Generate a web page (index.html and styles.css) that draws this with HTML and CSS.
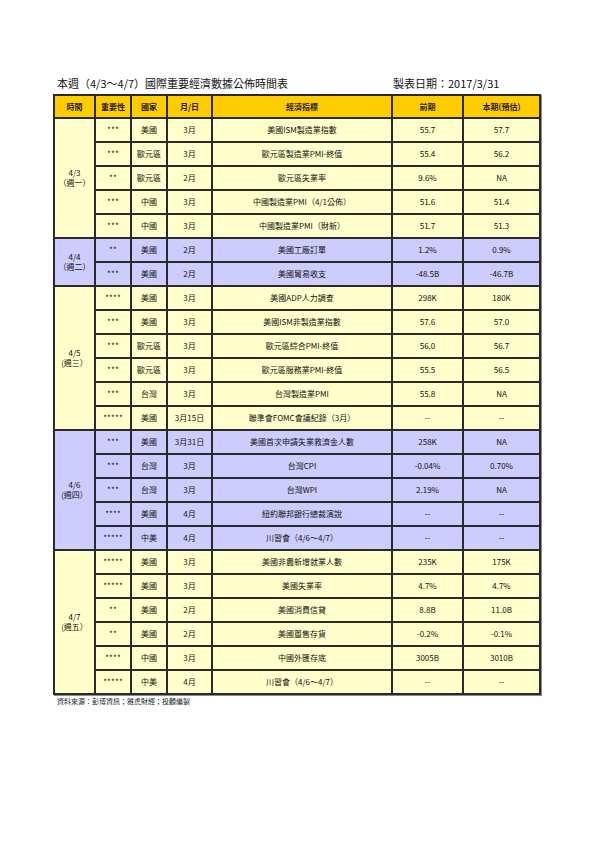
FILE: index.html
```html
<!DOCTYPE html>
<html lang="zh-Hant">
<head>
<meta charset="utf-8">
<link rel="stylesheet" href="styles.css">
</head>
<body>
<div class="page">
  <div class="title-row">
    <div class="title">本週（4/3～4/7）國際重要經濟數據公佈時間表</div>
    <div class="date">製表日期：2017/3/31</div>
  </div>
  <table class="sched">
    <colgroup>
      <col class="c-time"><col class="c-imp"><col class="c-country"><col class="c-month"><col class="c-ind"><col class="c-prev"><col class="c-cur">
    </colgroup>
    <thead>
      <tr class="head"><th>時間</th><th>重要性</th><th>國家</th><th>月/日</th><th>經濟指標</th><th>前期</th><th>本期(預估)</th></tr>
    </thead>
    <tbody class="yellow">
      <tr><td class="day" rowspan="5">4/3<br>（週一）</td><td class="star">***</td><td>美國</td><td>3月</td><td>美國ISM製造業指數</td><td>55.7</td><td>57.7</td></tr>
      <tr><td class="star">***</td><td>歐元區</td><td>3月</td><td>歐元區製造業PMI-終值</td><td>55.4</td><td>56.2</td></tr>
      <tr><td class="star">**</td><td>歐元區</td><td>2月</td><td>歐元區失業率</td><td>9.6%</td><td>NA</td></tr>
      <tr><td class="star">***</td><td>中國</td><td>3月</td><td>中國製造業PMI（4/1公佈）</td><td>51.6</td><td>51.4</td></tr>
      <tr><td class="star">***</td><td>中國</td><td>3月</td><td>中國製造業PMI（財新）</td><td>51.7</td><td>51.3</td></tr>
    </tbody>
    <tbody class="blue">
      <tr><td class="day" rowspan="2">4/4<br>（週二）</td><td class="star">**</td><td>美國</td><td>2月</td><td>美國工廠訂單</td><td>1.2%</td><td>0.9%</td></tr>
      <tr><td class="star">***</td><td>美國</td><td>2月</td><td>美國貿易收支</td><td>-48.5B</td><td>-46.7B</td></tr>
    </tbody>
    <tbody class="yellow">
      <tr><td class="day" rowspan="6">4/5<br>(週三）</td><td class="star">****</td><td>美國</td><td>3月</td><td>美國ADP人力調查</td><td>298K</td><td>180K</td></tr>
      <tr><td class="star">***</td><td>美國</td><td>3月</td><td>美國ISM非製造業指數</td><td>57.6</td><td>57.0</td></tr>
      <tr><td class="star">***</td><td>歐元區</td><td>3月</td><td>歐元區綜合PMI-終值</td><td>56.0</td><td>56.7</td></tr>
      <tr><td class="star">***</td><td>歐元區</td><td>3月</td><td>歐元區服務業PMI-終值</td><td>55.5</td><td>56.5</td></tr>
      <tr><td class="star">***</td><td>台灣</td><td>3月</td><td>台灣製造業PMI</td><td>55.8</td><td>NA</td></tr>
      <tr><td class="star">*****</td><td>美國</td><td>3月15日</td><td>聯準會FOMC會議紀錄（3月）</td><td>--</td><td>--</td></tr>
    </tbody>
    <tbody class="blue">
      <tr><td class="day" rowspan="5">4/6<br>(週四）</td><td class="star">***</td><td>美國</td><td>3月31日</td><td>美國首次申請失業救濟金人數</td><td>258K</td><td>NA</td></tr>
      <tr><td class="star">***</td><td>台灣</td><td>3月</td><td>台灣CPI</td><td>-0.04%</td><td>0.70%</td></tr>
      <tr><td class="star">***</td><td>台灣</td><td>3月</td><td>台灣WPI</td><td>2.19%</td><td>NA</td></tr>
      <tr><td class="star">****</td><td>美國</td><td>4月</td><td>紐約聯邦銀行總裁演說</td><td>--</td><td>--</td></tr>
      <tr><td class="star">*****</td><td>中美</td><td>4月</td><td>川習會（4/6～4/7）</td><td>--</td><td>--</td></tr>
    </tbody>
    <tbody class="yellow">
      <tr><td class="day" rowspan="6">4/7<br>(週五）</td><td class="star">*****</td><td>美國</td><td>3月</td><td>美國非農新增就業人數</td><td>235K</td><td>175K</td></tr>
      <tr><td class="star">*****</td><td>美國</td><td>3月</td><td>美國失業率</td><td>4.7%</td><td>4.7%</td></tr>
      <tr><td class="star">**</td><td>美國</td><td>2月</td><td>美國消費信貸</td><td>8.8B</td><td>11.0B</td></tr>
      <tr><td class="star">**</td><td>美國</td><td>2月</td><td>美國躉售存貨</td><td>-0.2%</td><td>-0.1%</td></tr>
      <tr><td class="star">****</td><td>中國</td><td>3月</td><td>中國外匯存底</td><td>3005B</td><td>3010B</td></tr>
      <tr><td class="star">*****</td><td>中美</td><td>4月</td><td>川習會（4/6～4/7）</td><td>--</td><td>--</td></tr>
    </tbody>
  </table>
  <div class="source">資料來源：彭博資訊；雅虎財經；投顧編製</div>
</div>
</body>
</html>
```

FILE: styles.css
```css
html, body {
  margin: 0;
  padding: 0;
  background: #ffffff;
}
body {
  font-family: "Noto Sans CJK TC", "Noto Sans", sans-serif;
  color: #111;
}
.page {
  padding: 76px 0 0 53px;
  width: 486px;
}
.title-row {
  display: grid;
  grid-template-columns: 336px auto;
  padding-left: 4px;
  font-size: 11px;
  line-height: 14px;
  height: 14px;
  margin-bottom: 4px;
  color: #111;
}
.sched {
  width: 486px;
  border-collapse: collapse;
  table-layout: fixed;
  box-shadow: 1px 1px 0 #8a8a8a;
  font-size: 8px;
}
.c-time { width: 41px; }
.c-imp { width: 36px; }
.c-country { width: 36px; }
.c-month { width: 45px; }
.c-ind { width: 180px; }
.c-prev { width: 71px; }
.c-cur { width: 77px; }
.sched th, .sched td {
  border: 2px solid #2a2a2a;
  text-align: center;
  vertical-align: middle;
  padding: 0;
  white-space: nowrap;
  line-height: 10px;
}
.head {
  height: 23px;
  background: #ffcc00;
}
.sched th {
  font-weight: bold;
  color: #2a1a10;
}
.yellow { background: #ffffcc; }
.blue { background: #ccccff; }
.sched tbody tr { height: 24px; }
.star {
  font-size: 8px;
  letter-spacing: 0.2px;
}
.day {
  line-height: 9px;
}
.source {
  padding-left: 4px;
  margin-top: 1px;
  font-size: 7px;
  line-height: 10px;
  color: #222;
}
```
